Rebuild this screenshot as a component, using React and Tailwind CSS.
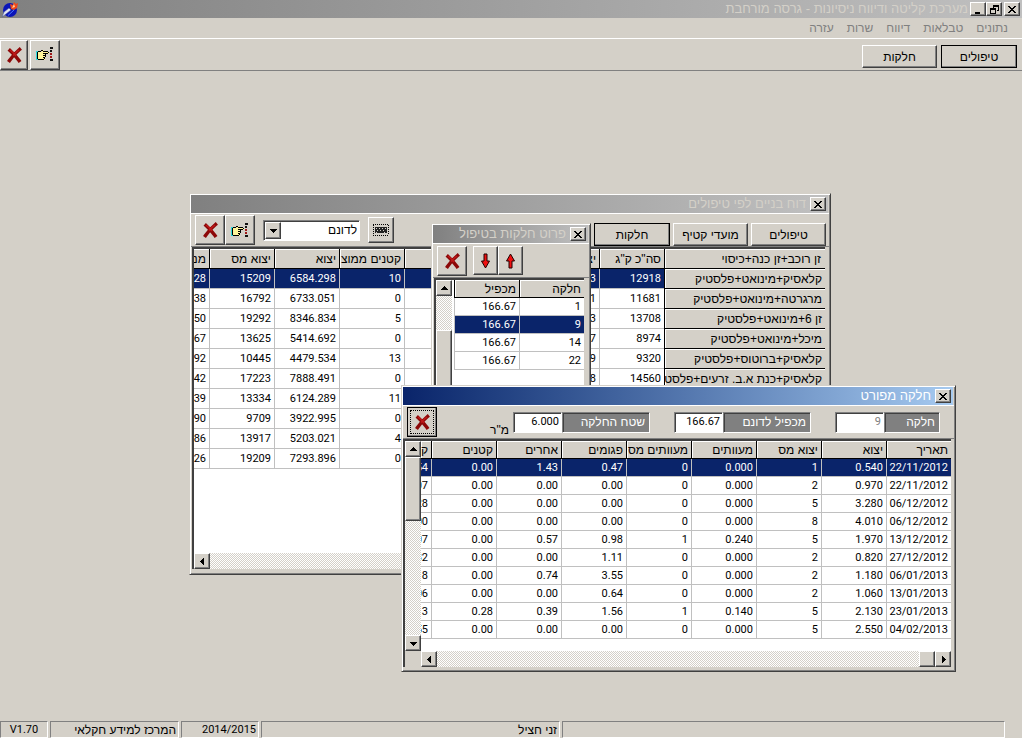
import clsx from 'clsx';

const RAISED = 'bg-[#d4d0c8] border border-t-white border-l-white border-r-[#404040] border-b-[#404040] shadow-[inset_-1px_-1px_0_#808080]';
const SUNKEN = 'border border-t-[#808080] border-l-[#808080] border-r-white border-b-white shadow-[inset_1px_1px_0_#404040]';
const HEAD_CELL = 'bg-[#d4d0c8] border-l border-b border-black shadow-[inset_1px_1px_0_#fff] font-normal';
const NUM = 'font-[Roboto,sans-serif] text-[11px]';

const MENU = ['נתונים', 'טבלאות', 'דיווח', 'שרות', 'עזרה'];

const REPORT_HEAD = ['סה"כ ק"ג', 'יצוא', '', '', 'קטנים ממוצ', 'יצוא', 'יצוא מס', 'מנ'];
const REPORT_ROWS = [
  { name: 'קלאסיק+מינואט+פלסטיק', cells: ['12918', '3', '', '', '10', '6584.298', '15209', '28'] },
  { name: 'מרגרטה+מינואט+פלסטיק', cells: ['11681', '1', '', '', '0', '6733.051', '16792', '38'] },
  { name: 'זן 6+מינואט+פלסטיק', cells: ['13708', '3', '', '', '5', '8346.834', '19292', '50'] },
  { name: 'מיכל+מינואט+פלסטיק', cells: ['8974', '7', '', '', '0', '5414.692', '13625', '67'] },
  { name: 'קלאסיק+ברוטוס+פלסטיק', cells: ['9320', '9', '', '', '13', '4479.534', '10445', '92'] },
  { name: 'קלאסיק+כנת א.ב. זרעים+פלסט', cells: ['14560', '8', '', '', '0', '7888.491', '17223', '42'] },
  { name: '', cells: ['', '', '', '', '11', '6124.289', '13334', '39'] },
  { name: '', cells: ['', '', '', '', '0', '3922.995', '9709', '90'] },
  { name: '', cells: ['', '', '', '', '4', '5203.021', '13917', '86'] },
  { name: '', cells: ['', '', '', '', '0', '7293.896', '19209', '26'] },
];

const PLOTS = [['1', '166.67'], ['9', '166.67'], ['14', '166.67'], ['22', '166.67']];

const DETAIL_HEAD = ['תאריך', 'יצוא', 'יצוא מס', 'מעוותים', 'מעוותים מס', 'פגומים', 'אחרים', 'קטנים', 'ק'];
const DETAIL_ROWS = [
  ['22/11/2012', '0.540', '1', '0.000', '0', '0.47', '1.43', '0.00', '54'],
  ['22/11/2012', '0.970', '2', '0.000', '0', '0.00', '0.00', '0.00', '07'],
  ['06/12/2012', '3.280', '5', '0.000', '0', '0.00', '0.00', '0.00', '28'],
  ['06/12/2012', '4.010', '8', '0.000', '0', '0.00', '0.00', '0.00', '00'],
  ['13/12/2012', '1.970', '5', '0.240', '1', '0.98', '0.57', '0.00', '07'],
  ['27/12/2012', '0.820', '2', '0.000', '0', '1.11', '0.00', '0.00', '32'],
  ['06/01/2013', '1.180', '2', '0.000', '0', '3.55', '0.74', '0.00', '8'],
  ['13/01/2013', '1.060', '2', '0.000', '0', '0.64', '0.00', '0.00', '06'],
  ['23/01/2013', '2.130', '5', '0.140', '1', '1.56', '0.39', '0.28', '3'],
  ['04/02/2013', '2.550', '5', '0.000', '0', '0.00', '0.00', '0.00', '55'],
];

function RedX() {
  return (
    <svg width="15" height="16" viewBox="0 0 15 16">
      <path d="M3 3.500Q8 8 12 13.500M12.500 2.500Q7 7 2.500 13.500" stroke="#8c0808" strokeWidth="3.500" strokeLinecap="square" fill="none" />
      <path d="M3 3Q7 6 9 9M12 3Q8 6 6 8.500" stroke="#c01818" strokeWidth="1.500" fill="none" />
    </svg>
  );
}

function Hand() {
  return (
    <svg width="18" height="15" viewBox="0 0 18 15" shapeRendering="crispEdges">
      <path d="M0 4h2v9H0z" fill="#30d8d8" />
      <path d="M2 5h3l2-2h1v2h5v2H9v5l-1 1H4l-2-1z" fill="#fff59a" />
      <path d="M1 5h1v7H1zM2 4h3v1H2zM5 3h2v1H5zM7 4h5v1H7zM12 5h1v1h-1zM7 6h5v1H7zM7 8h3v1H7zM7 10h2v1H7zM2 12h6v1H2zM9 7h1v1H9zM9 9h1v1H9zM8 11h1v1H8z" fill="#000" />
      <path d="M14 0h3v2h-3zM14 12h3v2h-3zM14 3h2v2h-2z" fill="#111" />
      <path d="M14 6h2v2h-2zM14 9h2v2h-2z" fill="#a01818" />
    </svg>
  );
}

function Arrow({ up }) {
  return (
    <svg width="11" height="16" viewBox="0 0 11 16" className={clsx(!up && 'rotate-180')}>
      <path d="M5.500 1 9.500 8H7v7H4V8H1.500z" fill="#f01010" stroke="#200" />
    </svg>
  );
}

function Keyboard() {
  return (
    <svg width="16" height="12" viewBox="0 0 16 12" shapeRendering="crispEdges">
      <path d="M0 .5h16M0 11.500h16" stroke="#000" strokeDasharray="1 1" />
      <path d="M.5 1v10M15.500 1v10" stroke="#000" strokeDasharray="1 1" />
      <path d="M2 3h12v6H2z" fill="#222" />
      <path d="M3 4.500h10M4 6.500h9M3 8h3M11 8h2" stroke="#d4d0c8" strokeDasharray="1 2" />
    </svg>
  );
}

function AppLogo() {
  return (
    <svg width="17" height="17" viewBox="0 0 17 17">
      <circle cx="8" cy="9" r="7" fill="#0a14b8" />
      <path d="M9 8 8 3l3 1 1-3 2 2 2-1-1 5-3 2z" fill="#f04818" />
      <path d="M12 3l1 3-3 1z" fill="#ffd0a0" />
      <path d="M0 16 2 11l5-4 2 2-5 4z" fill="#e0e4f4" stroke="#405090" strokeWidth=".5" />
      <path d="M6 14.500 12 9" stroke="#4a78ff" />
    </svg>
  );
}

const GLYPHS = {
  up: 'M4 2h1v1H4zM3 3h3v1H3zM2 4h5v1H2zM1 5h7v1H1z',
  down: 'M1 3h7v1H1zM2 4h5v1H2zM3 5h3v1H3zM4 6h1v1H4z',
  left: 'M5 1h1v7H5zM4 2h1v5H4zM3 3h1v3H3zM2 4h1v1H2z',
  right: 'M3 1h1v7H3zM4 2h1v5H4zM5 3h1v3H5zM6 4h1v1H6z',
  close: 'M0 1h2v1H0zM6 1h2v1H6zM1 2h2v1H1zM5 2h2v1H5zM2 3h4v1H2zM3 4h2v1H3zM2 5h4v1H2zM1 6h2v1H1zM5 6h2v1H5zM0 7h2v1H0zM6 7h2v1H6z',
  min: 'M1 7h5v2H1z',
  restore: 'M3 0h6v6H7V5h1V2H4v1H3zM0 3h6v6H0zM1 5v3h4V5z',
};

function Glyph({ name }) {
  return (
    <svg width="9" height="9" viewBox="0 0 9 9" shapeRendering="crispEdges">
      <path d={GLYPHS[name]} fillRule="evenodd" />
    </svg>
  );
}

function SmallButton({ name, className = 'w-4 h-4' }) {
  return (
    <button aria-label={name} className={clsx(RAISED, 'flex items-center justify-center shrink-0', className)}>
      <Glyph name={name} />
    </button>
  );
}

function IconButton({ label, active, className = 'w-[30px] h-[30px]', children }) {
  return (
    <button aria-label={label} className={clsx(RAISED, 'flex items-center justify-center shrink-0', active && 'outline outline-black -outline-offset-1', className)}>
      {active ? <span className="border border-dotted border-black w-6 h-6 flex items-center justify-center">{children}</span> : children}
    </button>
  );
}

function TextButton({ active, children }) {
  return (
    <button className={clsx(RAISED, 'h-[23px] shrink-0 text-[12px] whitespace-nowrap', active ? 'w-[76px] outline outline-black -outline-offset-1' : 'w-[75px]')}>{children}</button>
  );
}

function Window({ title, active, className, children }) {
  return (
    <section className={clsx('absolute flex flex-col p-px bg-[#d4d0c8] border border-t-[#d4d0c8] border-l-[#d4d0c8] border-r-[#404040] border-b-[#404040] shadow-[inset_1px_1px_0_#fff,inset_-1px_-1px_0_#808080]', className)}>
      <header className={clsx('h-[18px] shrink-0 flex items-center gap-1 px-[2px] mr-px bg-linear-to-r', active ? 'from-[#0a246a] to-[#a6caf0] text-white' : 'from-[#808080] to-[#c0c0c0] text-[#d4d0c8]')}>
        <SmallButton name="close" className="w-4 h-[14px]" />
        <h2 className="text-[13px] leading-4 whitespace-nowrap">{title}</h2>
      </header>
      {children}
    </section>
  );
}

const TRACK = 'bg-[repeating-conic-gradient(#fff_0_25%,#d4d0c8_0_50%)] bg-[length:2px_2px]';

function Field({ id, label, value, labelWidth, disabled }) {
  return (
    <div className="flex h-[21px]">
      <label htmlFor={id} className={clsx(SUNKEN, 'bg-[#808080] text-white text-[12px] leading-[18px] px-1 whitespace-nowrap', labelWidth)}>{label}</label>
      <input id={id} readOnly disabled={disabled} defaultValue={value} className={clsx(SUNKEN, NUM, 'w-[49px] bg-white px-[2px]', disabled && 'text-[#808080]')} />
    </div>
  );
}

function ReportWindow() {
  return (
    <Window title="דוח בניים לפי טיפולים" className="left-[189px] top-[122px] w-[642px] h-[382px]">
      <div className="h-[34px] shrink-0 flex items-center border-t border-t-white border-b border-b-[#808080] pr-[3px] pl-1">
        <div className="flex gap-[3px] self-end">
          <TextButton>טיפולים</TextButton>
          <TextButton>מועדי קטיף</TextButton>
          <TextButton active>חלקות</TextButton>
        </div>
        <div className="mr-auto flex items-center">
          <IconButton label="מקלדת" className="w-[26px] h-[26px]"><Keyboard /></IconButton>
          <div className="relative mr-2 ml-2">
            <select aria-label="יחידה" className={clsx(SUNKEN, 'appearance-none block w-[97px] h-[21px] bg-white text-[12px] leading-4 pr-[2px]')}>
              <option>לדונם</option>
            </select>
            <span className={clsx(RAISED, 'absolute left-[2px] top-[2px] w-4 h-[17px] flex items-center justify-center pointer-events-none')}><Glyph name="down" /></span>
          </div>
          <IconButton label="יציאה"><Hand /></IconButton>
          <IconButton label="סגור"><RedX /></IconButton>
        </div>
      </div>
      <div className="flex-1 flex flex-col bg-white border-t-2 border-l-2 border-[#404040] ml-px mr-1 mb-1 overflow-hidden">
        <table className="table-fixed w-[681px] border-separate border-spacing-0 text-[12px] whitespace-nowrap">
          <colgroup>
            <col className="w-[161px]" />
            {REPORT_HEAD.map((_, i) => <col key={i} className="w-[65px]" />)}
          </colgroup>
          <thead>
            <tr className="h-5">
              <th className={clsx(HEAD_CELL, 'leading-4 text-right pr-1')}>זן רוכב+זן כנה+כיסוי</th>
              {REPORT_HEAD.map((h, i) => <th key={i} className={clsx(HEAD_CELL, 'leading-4 text-right pr-[3px]')}>{h}</th>)}
            </tr>
          </thead>
          <tbody>
            {REPORT_ROWS.map((row, r) => (
              <tr key={r} className="h-5">
                <th className={clsx(HEAD_CELL, 'leading-4 text-right pr-[3px] overflow-hidden')}>{row.name}</th>
                {row.cells.map((c, i) => (
                  <td key={i} className={clsx(NUM, 'leading-4 border-l border-b border-[#c0c0c0] text-right pr-[3px]', r === 0 && 'bg-[#0a246a] text-white')}>{c}</td>
                ))}
              </tr>
            ))}
          </tbody>
        </table>
        <div className={clsx(TRACK, 'mt-auto h-4 flex justify-end')}>
          <SmallButton name="left" />
        </div>
      </div>
    </Window>
  );
}

function PlotsWindow() {
  return (
    <Window title="פרוט חלקות בטיפול" className="left-[431px] top-[152px] w-[160px] h-[280px]">
      <div className="h-[35px] shrink-0 flex flex-row-reverse items-center border-t border-t-white border-b border-b-[#808080] pl-1">
        <IconButton label="סגור"><RedX /></IconButton>
        <IconButton label="למטה" className="w-[25px] h-[29px] ml-[6px]"><Arrow /></IconButton>
        <IconButton label="למעלה" className="w-[25px] h-[29px]"><Arrow up /></IconButton>
      </div>
      <div className="flex-1 flex bg-white border-t-2 border-l-2 border-[#404040] ml-px mr-[5px] mb-1 overflow-hidden">
        <div className="flex-1">
          <table className="table-fixed w-[130px] border-separate border-spacing-0 text-[12px] whitespace-nowrap">
            <thead>
              <tr className="h-[18px]">
                <th className={clsx(HEAD_CELL, 'text-right pr-[3px] leading-4')}>חלקה</th>
                <th className={clsx(HEAD_CELL, 'text-right pr-[3px] leading-4')}>מכפיל</th>
              </tr>
            </thead>
            <tbody>
              {PLOTS.map((row, r) => (
                <tr key={row[0]} className="h-[18px]">
                  {row.map((c, i) => (
                    <td key={i} className={clsx(NUM, 'leading-4 border-l border-b border-[#c0c0c0] text-right pr-[3px]', r === 1 && 'bg-[#0a246a] text-white')}>{c}</td>
                  ))}
                </tr>
              ))}
            </tbody>
          </table>
        </div>
        <div className={clsx(TRACK, 'w-4 flex flex-col')}>
          <SmallButton name="up" />
          <div className={clsx(RAISED, 'mt-[34px] h-[120px]')} />
        </div>
      </div>
    </Window>
  );
}

function DetailWindow() {
  return (
    <Window active title="חלקה מפורט" className="left-[401px] top-[314px] w-[555px] h-[287px]">
      <div className="h-[34px] shrink-0 flex items-center border-t border-t-white border-b border-b-[#808080] pr-[14px] pl-1">
        <div className="flex items-center gap-6">
          <Field id="plot" label="חלקה" value="9" labelWidth="w-14" disabled />
          <Field id="factor" label="מכפיל לדונם" value="166.67" labelWidth="w-[88px]" />
          <Field id="area" label="שטח החלקה" value="6.000" labelWidth="w-[88px]" />
        </div>
        <span className="text-[12px] leading-4 mr-1 self-end">מ"ר</span>
        <div className="mr-auto"><IconButton label="סגור" active><RedX /></IconButton></div>
      </div>
      <div className="flex-1 flex flex-col bg-white border-t-2 border-l-2 border-[#404040] mr-[3px] mb-[3px] overflow-hidden">
        <div className="flex-1 flex">
          <div className="flex-1 overflow-hidden">
            <table className="table-fixed w-[530px] border-separate border-spacing-0 text-[12px] whitespace-nowrap">
              <colgroup>
                {DETAIL_HEAD.map((_, i) => <col key={i} className={i < 8 ? 'w-[65px]' : 'w-[10px]'} />)}
              </colgroup>
              <thead>
                <tr className="h-[18px]">
                  {DETAIL_HEAD.map((h, i) => <th key={i} className={clsx(HEAD_CELL, 'text-right pr-[3px] leading-4', i === 8 && 'border-l-0')}>{h}</th>)}
                </tr>
              </thead>
              <tbody>
                {DETAIL_ROWS.map((row, r) => (
                  <tr key={r} className="h-[18px]">
                    {row.map((c, i) => (
                      <td key={i} className={clsx(NUM, 'leading-4 border-b border-[#c0c0c0] text-right pr-[3px]', i < 8 && 'border-l', r === 0 && 'bg-[#0a246a] text-white')}>{c}</td>
                    ))}
                  </tr>
                ))}
              </tbody>
            </table>
          </div>
          <div className={clsx(TRACK, 'w-4 shrink-0 flex flex-col')}>
            <SmallButton name="up" />
            <div className={clsx(RAISED, 'h-16')} />
            <SmallButton name="down" className="w-4 h-4 mt-auto" />
          </div>
        </div>
        <div className="h-4 flex bg-[#d4d0c8]">
          <div className={clsx(TRACK, 'flex-1 flex')}>
            <SmallButton name="right" />
            <div className={clsx(RAISED, 'w-4')} />
            <SmallButton name="left" className="w-4 h-4 mr-auto" />
          </div>
          <div className="w-4" />
        </div>
      </div>
    </Window>
  );
}

function StatusPanel({ className, children }) {
  return (
    <div className={clsx('border border-t-[#808080] border-l-[#808080] border-r-white border-b-white px-[2px] leading-4 whitespace-nowrap', className)}>{children}</div>
  );
}

export default function App() {
  return (
    <div dir="rtl" className="min-h-screen flex flex-col bg-[#d4d0c8] text-black overflow-hidden font-['Liberation_Sans',Arial,sans-serif]">
      <header className="h-[18px] shrink-0 flex items-center px-[2px] bg-linear-to-r from-[#808080] to-[#c0c0c0]">
        <SmallButton name="close" className="w-4 h-[14px]" />
        <SmallButton name="restore" className="w-4 h-[14px] mr-[2px]" />
        <SmallButton name="min" className="w-4 h-[14px]" />
        <h1 className="text-[13px] leading-4 text-[#d4d0c8] mr-[2px]">מערכת קליטה ודיווח ניסיונות - גרסה מורחבת</h1>
        <span className="mr-auto"><AppLogo /></span>
      </header>
      <nav className="h-5 shrink-0 flex items-center gap-[13px] px-[14px] text-[12px] leading-4 text-[#808080]">
        {MENU.map(item => <a key={item} href="#">{item}</a>)}
      </nav>
      <div className="h-[33px] shrink-0 flex items-center border-t border-t-white border-b border-b-[#808080] pr-[5px]">
        <div className="flex gap-1 pt-1">
          <TextButton active>טיפולים</TextButton>
          <TextButton>חלקות</TextButton>
        </div>
        <div className="mr-auto flex gap-[2px]">
          <IconButton label="יציאה"><Hand /></IconButton>
          <IconButton label="סגור" className="w-7 h-[30px]"><RedX /></IconButton>
        </div>
      </div>
      <main className="relative flex-1">
        <ReportWindow />
        <PlotsWindow />
        <DetailWindow />
      </main>
      <footer className="h-[17px] shrink-0 flex gap-[2px] pr-[17px] text-[12px]">
        <StatusPanel className="flex-1" />
        <StatusPanel className="w-[299px]">זני חציל</StatusPanel>
        <StatusPanel className={clsx(NUM, 'w-[78px]')}>2014/2015</StatusPanel>
        <StatusPanel className="w-[129px]">המרכז למידע חקלאי</StatusPanel>
        <StatusPanel className={clsx(NUM, 'w-12 text-center')}>V1.70</StatusPanel>
      </footer>
    </div>
  );
}
